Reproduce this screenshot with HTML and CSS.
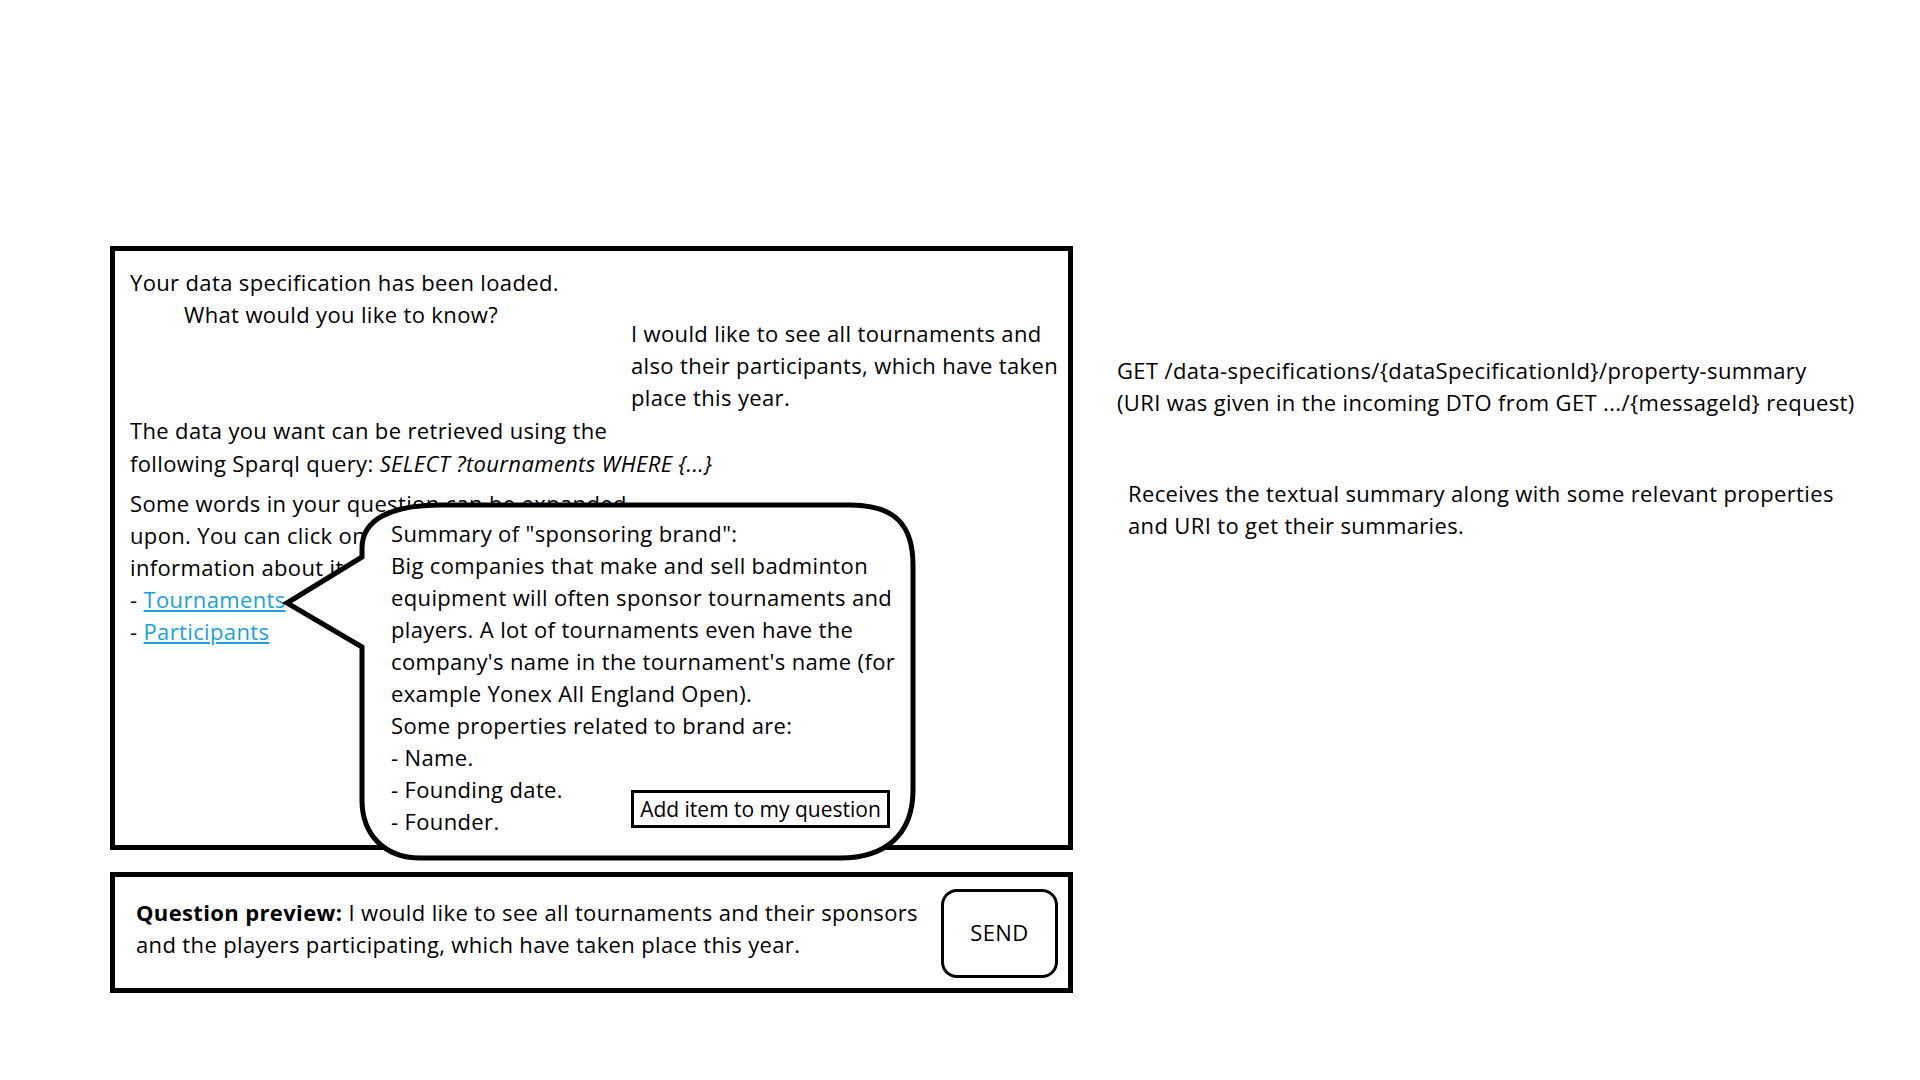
FILE: index.html
```html
<!DOCTYPE html>
<html lang="en">
<head>
<meta charset="utf-8">
<title>Chat mockup</title>
<link rel="stylesheet" href="styles.css">
</head>
<body>
<div class="page">
  <div class="left">
    <section class="chat">
      <p>Your data specification has been loaded.</p>
      <p class="indent">What would you like to know?</p>
      <p class="user">I would like to see all tournaments and<br>also their participants, which have taken<br>place this year.</p>
      <p class="answer">The data you want can be retrieved using the<br>following Sparql query: <em>SELECT ?tournaments WHERE {...}</em></p>
      <p class="gap">Some words in your question can be expanded<br>upon. You can click on them to get more<br>information about it.</p>
      <ul class="terms">
        <li>- <a href="#">Tournaments</a></li>
        <li>- <a href="#">Participants</a></li>
      </ul>
      <div class="popup">
        <svg class="bubble" width="640" height="370" viewBox="0 0 640 370">
          <path d="M7 108 L82 62 L82 53 C82 25 110 10 160 10 L570 10 C615 10 633 30 633 70 L633 295 C633 340 605 363 560 363 L140 363 C105 363 82 340 82 305 L82 152 Z" fill="#fff" stroke="#000" stroke-width="5" stroke-linejoin="miter"/>
        </svg>
        <div class="popup-body">
          <p>Summary of "sponsoring brand":<br>Big companies that make and sell badminton<br>equipment will often sponsor tournaments and<br>players. A lot of tournaments even have the<br>company's name in the tournament's name (for<br>example Yonex All England Open).<br>Some properties related to brand are:<br>- Name.</p>
          <div class="props">
            <ul>
              <li>- Founding date.</li>
              <li>- Founder.</li>
            </ul>
            <button class="add" type="button">Add item to my question</button>
          </div>
        </div>
      </div>
    </section>
    <section class="preview">
      <p class="preview-text"><strong>Question preview:</strong> I would like to see all tournaments and their sponsors<br>and the players participating, which have taken place this year.</p>
      <button class="send" type="button">SEND</button>
    </section>
  </div>
  <div class="notes">
    <p>GET /data-specifications/{dataSpecificationId}/property-summary<br>(URI was given in the incoming DTO from GET .../{messageId} request)</p>
    <p class="note2">Receives the textual summary along with some relevant properties<br>and URI to get their summaries.</p>
  </div>
</div>
</body>
</html>
```

FILE: styles.css
```css
html, body {
  margin: 0;
  padding: 0;
  background: #fff;
}

body {
  font-family: "Open Sans", "Noto Sans", sans-serif;
  font-size: 22px;
  line-height: 32px;
  letter-spacing: 0.36px;
  color: #000;
}

p {
  margin: 0;
}

.page {
  display: flex;
  align-items: flex-start;
  padding: 246px 0 0 110px;
}

.left {
  width: 963px;
  display: flex;
  flex-direction: column;
  gap: 22px;
  flex: none;
}

.chat {
  position: relative;
  box-sizing: border-box;
  height: 604px;
  border: 5px solid #000;
  padding: 15px 15px;
  white-space: nowrap;
}

.indent {
  padding-left: 54px;
}

.user {
  margin: -13px 0 0 501px;
}

.answer {
  margin-top: 1px;
  line-height: 33px;
}

.gap {
  margin-top: 7px;
}

.terms {
  list-style: none;
  margin: 0;
  padding: 0;
}

.terms a {
  color: #1a9fe0;
  text-decoration: underline;
}

.popup {
  position: absolute;
  left: 165px;
  top: 244px;
  width: 640px;
  height: 370px;
}

.bubble {
  position: absolute;
  left: 0;
  top: 0;
  display: block;
}

.popup-body {
  position: absolute;
  left: 111px;
  top: 22px;
}

.props {
  display: grid;
  grid-template-columns: 240px auto;
  align-items: start;
}

.props ul {
  list-style: none;
  margin: 0;
  padding: 0;
}

.add {
  box-sizing: border-box;
  width: 259px;
  height: 38px;
  margin-top: 17px;
  padding: 0;
  border: 3px solid #000;
  background: #fff;
  font-family: inherit;
  font-size: 21px;
  letter-spacing: 0;
  line-height: 30px;
  color: #000;
  text-align: center;
}

.preview {
  box-sizing: border-box;
  height: 121px;
  border: 5px solid #000;
  padding: 12px 10px 0 21px;
  display: flex;
  align-items: flex-start;
}

.preview-text {
  flex: 1;
  margin-top: 7px;
  white-space: nowrap;
}

.send {
  box-sizing: border-box;
  width: 117px;
  height: 89px;
  border: 3px solid #000;
  border-radius: 16px;
  background: #fff;
  font-family: inherit;
  font-size: 22px;
  letter-spacing: 0.36px;
  color: #000;
  padding: 0 0 3px;
  flex: none;
}

.notes {
  margin-left: 44px;
  padding-top: 108px;
  white-space: nowrap;
}

.note2 {
  margin-top: 59px;
  padding-left: 11px;
}
```
